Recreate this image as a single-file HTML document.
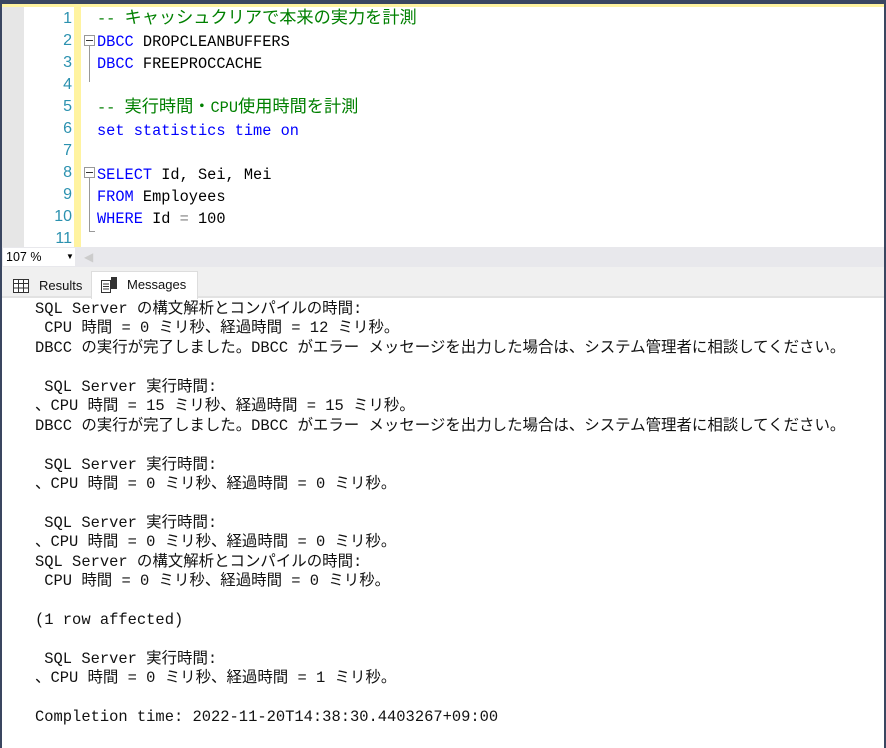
<!DOCTYPE html>
<html><head><meta charset="utf-8"><style>
*{margin:0;padding:0;box-sizing:border-box}
body{width:886px;height:748px;overflow:hidden;background:#fff;position:relative;font-family:"Liberation Mono","Noto Sans CJK JP",monospace}
.abs{position:absolute}
.code{position:absolute;left:97px;font-size:15.3px;line-height:22px;white-space:pre;color:#000}
.ln{position:absolute;width:72px;left:0;text-align:right;font-family:"Liberation Sans",sans-serif;font-size:16px;color:#2b91af;line-height:22px}
.kw{color:#0000ff}.cm{color:#008000}
.cj{font-size:17.2px}
.msg{position:absolute;left:35px;top:300px;font-size:15.45px;line-height:19.43px;white-space:pre;color:#111}
</style></head><body>
<div class="abs" style="left:0;top:0;width:886px;height:4px;background:#3a4660"></div>
<div class="abs" style="left:0;top:4px;width:886px;height:3px;background:#fff3a0"></div>
<div class="abs" style="left:0;top:0;width:2px;height:748px;background:#3a4660"></div>
<div class="abs" style="left:884px;top:0;width:2px;height:748px;background:#3a4660"></div>
<div class="abs" style="left:2px;top:7px;width:22px;height:240px;background:#e6e6e6"></div>
<div class="abs" style="left:74px;top:7px;width:7px;height:240px;background:#fff3a0"></div>
<div class="abs" style="left:89px;top:42px;width:1px;height:40px;background:#999"></div>
<div class="abs" style="left:89px;top:174px;width:1px;height:58px;background:#999"></div>
<div class="abs" style="left:89px;top:231px;width:6px;height:1px;background:#999"></div>
<div class="abs" style="left:84px;top:35px;width:11px;height:11px;border:1px solid #999;background:#fff"><div style="margin:4px 1px 0;height:1px;background:#333"></div></div>
<div class="abs" style="left:84px;top:167px;width:11px;height:11px;border:1px solid #999;background:#fff"><div style="margin:4px 1px 0;height:1px;background:#333"></div></div>
<div style="position:absolute;top:8px;left:0">
<div class="ln" style="top:0">1</div><div class="ln" style="top:22px">2</div><div class="ln" style="top:44px">3</div><div class="ln" style="top:66px">4</div><div class="ln" style="top:88px">5</div><div class="ln" style="top:110px">6</div><div class="ln" style="top:132px">7</div><div class="ln" style="top:154px">8</div><div class="ln" style="top:176px">9</div><div class="ln" style="top:198px">10</div><div class="ln" style="top:220px">11</div>
</div>
<div class="code" style="top:8px"><span class="cm">-- <span class="cj">キャッシュクリアで本来の実力を計測</span></span>
<span class="kw">DBCC</span> DROPCLEANBUFFERS
<span class="kw">DBCC</span> FREEPROCCACHE

<span class="cm">-- <span class="cj">実行時間・</span>CPU<span class="cj">使用時間を計測</span></span>
<span class="kw">set statistics time on</span>

<span class="kw">SELECT</span> Id, Sei, Mei
<span class="kw">FROM</span> Employees
<span class="kw">WHERE</span> Id <span style="color:#808080">=</span> 100
</div>
<div class="abs" style="left:2px;top:247px;width:882px;height:20px;background:#e8e8ec"></div>
<div class="abs" style="left:3px;top:248px;width:72px;height:18px;background:#fff;font-family:'Liberation Sans',sans-serif;font-size:12.5px;line-height:18px;padding-left:3px;color:#000">107 %<span style="position:absolute;left:63px;top:0;font-size:8px">▼</span></div>
<div class="abs" style="left:84px;top:250px;color:#ccc;font-size:12px;font-family:'Liberation Sans',sans-serif">◀</div>
<div class="abs" style="left:2px;top:267px;width:882px;height:31px;background:#f0f0f0;border-bottom:2px solid #e2e2e2"></div>
<div class="abs" style="left:5px;top:274px;width:86px;height:24px;font-family:'Liberation Sans',sans-serif;font-size:13px;line-height:24px;color:#111">
<svg style="position:absolute;left:8px;top:5px" width="16" height="14"><rect x="0.5" y="0.5" width="15" height="13" fill="#fff" stroke="#333"/><path d="M0 4.5H16M0 9H16M5.5 0V14M10.5 0V14" stroke="#333"/></svg>
<span style="position:absolute;left:34px">Results</span></div>
<div class="abs" style="left:91px;top:271px;width:107px;height:28px;background:#fff;border:1px solid #ddd;border-bottom:none;font-family:'Liberation Sans',sans-serif;font-size:13px;line-height:26px;color:#111">
<svg style="position:absolute;left:9px;top:5px" width="17" height="16"><rect x="0.5" y="3.5" width="9" height="12" fill="#fff" stroke="#333"/><path d="M2 7H8M2 9.5H8M2 12H8" stroke="#333"/><rect x="10" y="0" width="6" height="12" fill="#333"/></svg>
<span style="position:absolute;left:35px">Messages</span></div>
<div class="msg">SQL Server の構文解析とコンパイルの時間:
 CPU 時間 = 0 ミリ秒、経過時間 = 12 ミリ秒。
DBCC の実行が完了しました。DBCC がエラー メッセージを出力した場合は、システム管理者に相談してください。

 SQL Server 実行時間:
、CPU 時間 = 15 ミリ秒、経過時間 = 15 ミリ秒。
DBCC の実行が完了しました。DBCC がエラー メッセージを出力した場合は、システム管理者に相談してください。

 SQL Server 実行時間:
、CPU 時間 = 0 ミリ秒、経過時間 = 0 ミリ秒。

 SQL Server 実行時間:
、CPU 時間 = 0 ミリ秒、経過時間 = 0 ミリ秒。
SQL Server の構文解析とコンパイルの時間:
 CPU 時間 = 0 ミリ秒、経過時間 = 0 ミリ秒。

(1 row affected)

 SQL Server 実行時間:
、CPU 時間 = 0 ミリ秒、経過時間 = 1 ミリ秒。

Completion time: 2022-11-20T14:38:30.4403267+09:00</div>
</body></html>
